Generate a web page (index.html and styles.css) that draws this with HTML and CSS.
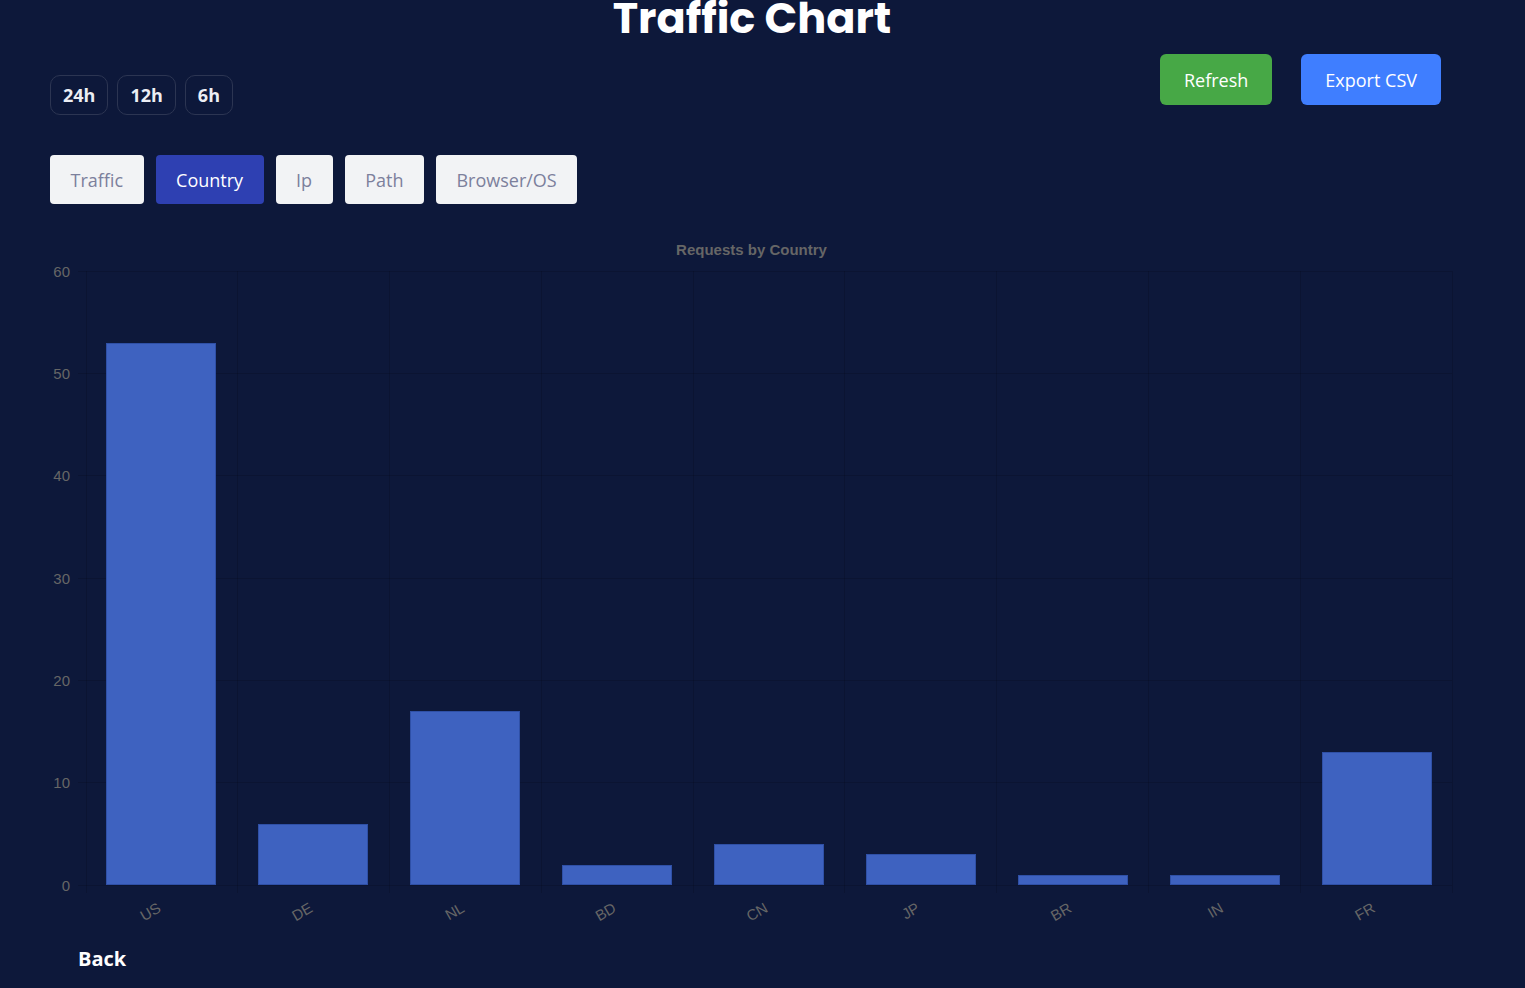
FILE: index.html
```html
<!DOCTYPE html>
<html lang="en">
<head>
<meta charset="UTF-8">
<meta name="viewport" content="width=device-width, initial-scale=1.0">
<title>Traffic Chart</title>
<link rel="stylesheet" href="styles.css">
</head>
<body>

<h1 class="title">Traffic Chart</h1>

<div class="toolbar">
    <div class="ranges">
        <button class="range">24h</button>
        <button class="range">12h</button>
        <button class="range">6h</button>
    </div>
    <div class="actions">
        <button class="action refresh">Refresh</button>
        <button class="action export">Export CSV</button>
    </div>
</div>

<div class="tabs">
    <button class="tab">Traffic</button>
    <button class="tab active">Country</button>
    <button class="tab">Ip</button>
    <button class="tab">Path</button>
    <button class="tab">Browser/OS</button>
</div>

<div class="chart">
    <svg width="1525" height="705" viewBox="0 0 1525 705">
        <text class="chart-title" x="751.5" y="25" text-anchor="middle">Requests by Country</text>

        <!-- grid -->
        <g class="grid">
            <line x1="78" y1="41" x2="1452" y2="41"/>
            <line x1="78" y1="143.5" x2="1452" y2="143.5"/>
            <line x1="78" y1="245.5" x2="1452" y2="245.5"/>
            <line x1="78" y1="348" x2="1452" y2="348"/>
            <line x1="78" y1="450.5" x2="1452" y2="450.5"/>
            <line x1="78" y1="552.5" x2="1452" y2="552.5"/>
            <line x1="78" y1="655.5" x2="1452" y2="655.5"/>
            <line x1="86" y1="41" x2="86" y2="663"/>
            <line x1="237.8" y1="41" x2="237.8" y2="663"/>
            <line x1="389.6" y1="41" x2="389.6" y2="663"/>
            <line x1="541.3" y1="41" x2="541.3" y2="663"/>
            <line x1="693.1" y1="41" x2="693.1" y2="663"/>
            <line x1="844.9" y1="41" x2="844.9" y2="663"/>
            <line x1="996.7" y1="41" x2="996.7" y2="663"/>
            <line x1="1148.4" y1="41" x2="1148.4" y2="663"/>
            <line x1="1300.2" y1="41" x2="1300.2" y2="663"/>
            <line x1="1452" y1="41" x2="1452" y2="663"/>
        </g>

        <!-- y axis -->
        <g class="ticks">
            <text x="70" y="46.5" text-anchor="end">60</text>
            <text x="70" y="149" text-anchor="end">50</text>
            <text x="70" y="251" text-anchor="end">40</text>
            <text x="70" y="353.5" text-anchor="end">30</text>
            <text x="70" y="456" text-anchor="end">20</text>
            <text x="70" y="558" text-anchor="end">10</text>
            <text x="70" y="660.5" text-anchor="end">0</text>
        </g>

        <!-- bars -->
        <g class="bars">
            <rect x="106.5" y="113.5" width="109" height="541"/>
            <rect x="258.5" y="594.5" width="109" height="60"/>
            <rect x="410.5" y="481.5" width="109" height="173"/>
            <rect x="562.5" y="635.5" width="109" height="19"/>
            <rect x="714.5" y="614.5" width="109" height="40"/>
            <rect x="866.5" y="624.5" width="109" height="30"/>
            <rect x="1018.5" y="645.5" width="109" height="9"/>
            <rect x="1170.5" y="645.5" width="109" height="9"/>
            <rect x="1322.5" y="522.5" width="109" height="132"/>
        </g>

        <!-- x axis -->
        <g class="ticks">
            <text x="162" y="681" text-anchor="end" transform="rotate(-30 162 681)">US</text>
            <text x="313.7" y="681" text-anchor="end" transform="rotate(-30 313.7 681)">DE</text>
            <text x="465.5" y="681" text-anchor="end" transform="rotate(-30 465.5 681)">NL</text>
            <text x="617.2" y="681" text-anchor="end" transform="rotate(-30 617.2 681)">BD</text>
            <text x="769" y="681" text-anchor="end" transform="rotate(-30 769 681)">CN</text>
            <text x="920.8" y="681" text-anchor="end" transform="rotate(-30 920.8 681)">JP</text>
            <text x="1072.6" y="681" text-anchor="end" transform="rotate(-30 1072.6 681)">BR</text>
            <text x="1224.4" y="681" text-anchor="end" transform="rotate(-30 1224.4 681)">IN</text>
            <text x="1376.1" y="681" text-anchor="end" transform="rotate(-30 1376.1 681)">FR</text>
        </g>
    </svg>
</div>

<a class="back" href="#">Back</a>

</body>
</html>
```

FILE: styles.css
```css
html, body {
    margin: 0;
    background: #0d183a;
    height: 100%;
    overflow: hidden;
}
body {
    font-family: "Open Sans", "Noto Sans", sans-serif;
    color: #fff;
}
button {
    font-family: inherit;
    cursor: pointer;
}
.title {
    margin: -8px 0 0;
    padding-right: 21px;
    text-align: center;
    font-family: "Poppins", "Inter", sans-serif;
    font-weight: 700;
    font-size: 43px;
    line-height: 52px;
    color: #fff;
}
.toolbar {
    display: flex;
    justify-content: space-between;
    align-items: flex-start;
    padding: 0 84px 0 50px;
    margin-top: 10px;
}
.ranges {
    display: flex;
    gap: 9px;
    margin-top: 21px;
}
.range {
    height: 40px;
    padding: 0 12px;
    background: transparent;
    border: 1px solid #2c3552;
    border-radius: 10px;
    color: #eceef4;
    font-size: 18px;
    font-weight: 700;
}
.actions {
    display: flex;
    gap: 29px;
}
.action {
    height: 51px;
    padding: 0 24px;
    border: none;
    border-radius: 6px;
    color: #fff;
    font-size: 18px;
}
.refresh {
    background: #47a846;
}
.export {
    background: #3f7eff;
}
.tabs {
    display: flex;
    gap: 12px;
    padding: 0 50px;
    margin-top: 40px;
}
.tab {
    height: 49px;
    padding: 0 20.5px;
    border: none;
    border-radius: 4px;
    background: #f2f3f5;
    color: #7c809c;
    font-size: 18px;
}
.tab.active {
    background: #2e40b2;
    color: #fff;
}
.chart {
    margin-top: 26px;
}
.chart svg {
    display: block;
}
.chart text {
    font-family: "Liberation Sans", Arial, sans-serif;
    font-size: 15px;
    fill: #666;
}
.chart .chart-title {
    font-weight: 700;
    fill: #666;
}
.grid line {
    stroke: rgba(0, 0, 0, 0.13);
    stroke-width: 1;
    shape-rendering: crispEdges;
}
.bars rect {
    fill: #3e62c0;
    stroke: #2f50a6;
    stroke-width: 1;
}
.back {
    display: inline-block;
    margin: 10px 0 0 78px;
    color: #fff;
    font-size: 20px;
    font-weight: 700;
    text-decoration: none;
}
```
